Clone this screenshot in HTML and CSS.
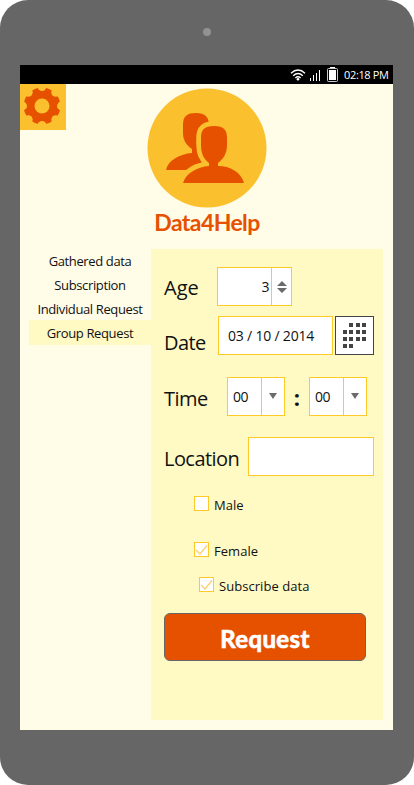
FILE: index.html
```html
<!DOCTYPE html>
<html lang="en">
<head>
<meta charset="utf-8">
<title>Data4Help</title>
<link rel="stylesheet" href="styles.css">
</head>
<body>
<div class="device">
  <div class="speaker"><span class="camera"></span></div>
  <main class="screen">
    <div class="status">
      <svg class="wifi" width="16" height="12" viewBox="0 0 16 12" fill="none" stroke="#fff" stroke-width="1.4"><path d="M1 4.2Q8-2 15 4.2M3.2 6.7Q8 2.5 12.8 6.7M5.4 9Q8 6.6 10.6 9"/><circle cx="8" cy="10.2" r="1.3" fill="#fff" stroke="none"/></svg>
      <svg class="signal" width="11" height="12" viewBox="0 0 11 12" fill="#fff"><path d="M0 9h1v3H0zM3 6h1v6H3zM6 4h1v8H6zM9 1h1v11H9z"/></svg>
      <svg class="battery" width="11" height="15" viewBox="0 0 11 15"><path d="M3 0h5v2H3z" fill="#fff"/><rect x=".5" y="1.5" width="10" height="13" rx="1" fill="none" stroke="#ccc"/><path d="M2 3h7v10H2z" fill="#fff"/></svg>
      <span class="clock">02:18 PM</span>
    </div>
    <header class="header">
      <button class="settings" aria-label="Settings">
        <svg width="46" height="46" viewBox="0 0 46 46"><circle cx="22" cy="22" r="18.4" fill="#e65100"/><g fill="#fbc02d"><circle cx="22" cy="22" r="7.5"/><circle cx="22" cy="2.6" r="4.4"/><circle cx="22" cy="41.4" r="4.4"/><circle cx="2.6" cy="22" r="4.4"/><circle cx="41.4" cy="22" r="4.4"/><circle cx="8.3" cy="8.3" r="4.4"/><circle cx="35.7" cy="8.3" r="4.4"/><circle cx="8.3" cy="35.7" r="4.4"/><circle cx="35.7" cy="35.7" r="4.4"/></g></svg>
      </button>
      <div class="brand">
        <svg width="120" height="120" viewBox="0 0 120 120"><circle cx="60" cy="60" r="59.5" fill="#fbc02d"/><path d="M49 25C58 25 62 29 62 37V45C62 54 58 60 53 63V65C65 66 75 70 79 82H19C21 72 33 66 45 65V61C39 57 36 52 36 45V37C36 28 40 25 49 25Z" fill="#e65100"/><path d="M67 38C77 38 80 42 80 50V57C80 66 76 71 71 75V78C83 78 94 84 97 95H36C39 85 50 79 62 78V75C57 71 54 66 54 57V50C54 42 57 38 67 38Z" fill="#fbc02d" stroke="#fbc02d" stroke-width="9.5"/><path d="M67 38C77 38 80 42 80 50V57C80 66 76 71 71 75V78C83 78 94 84 97 95H36C39 85 50 79 62 78V75C57 71 54 66 54 57V50C54 42 57 38 67 38Z" fill="#e65100"/></svg>
        <h1 class="title">Data4Help</h1>
      </div>
    </header>
    <div class="content">
      <nav class="nav">
        <a class="link">Gathered data</a>
        <a class="link">Subscription</a>
        <a class="link">Individual Request</a>
        <a class="link active">Group Request</a>
      </nav>
      <form class="panel">
        <div class="row age">
          <span class="label">Age</span>
          <div class="field split"><span class="value number">3</span><span class="arrow"><svg width="10" height="12" viewBox="0 0 10 12" fill="#6b6b6b"><path d="M0 5L5 0L10 5zM0 7h10L5 12z"/></svg></span></div>
        </div>
        <div class="row date">
          <span class="label">Date</span>
          <div class="field date-value">03 / 10 / 2014</div>
          <div class="calendar"><svg width="23" height="25" viewBox="0 0 23 25" fill="#444"><path d="M6 0h4v4H6zM13 0h4v4h-4zM19 0h4v4h-4zM0 7h4v4H0zM6 7h4v4H6zM13 7h4v4h-4zM19 7h4v4h-4zM0 14h4v4H0zM6 14h4v4H6zM13 14h4v4h-4zM19 14h4v4h-4zM0 21h4v4H0zM6 21h4v4H6z"/></svg></div>
        </div>
        <div class="row time">
          <span class="label">Time</span>
          <div class="field split"><span class="value">00</span><span class="arrow drop"><svg width="8" height="6" viewBox="0 0 8 6" fill="#6b6b6b"><path d="M0 0h8L4 6z"/></svg></span></div>
          <span class="colon">:</span>
          <div class="field split"><span class="value">00</span><span class="arrow drop"><svg width="8" height="6" viewBox="0 0 8 6" fill="#6b6b6b"><path d="M0 0h8L4 6z"/></svg></span></div>
        </div>
        <div class="row location">
          <span class="label">Location</span>
          <div class="field place"></div>
        </div>
        <div class="check male"><span class="box"></span><span class="text">Male</span></div>
        <div class="check female"><span class="box"><svg width="13" height="13" viewBox="0 0 13 13" fill="none" stroke="#fbd070" stroke-width="1.3"><path d="M1 7L5 11L12 2.5"/></svg></span><span class="text">Female</span></div>
        <div class="check subscribe"><span class="box"><svg width="13" height="13" viewBox="0 0 13 13" fill="none" stroke="#fbd070" stroke-width="1.3"><path d="M1 7L5 11L12 2.5"/></svg></span><span class="text">Subscribe data</span></div>
        <button class="submit" type="button">Request</button>
      </form>
    </div>
  </main>
</div>
</body>
</html>
```
FILE: styles.css
```css
* { box-sizing: border-box; }
body { margin: 0; background: #fff; font: 13px/18px "Open Sans", "Noto Sans", sans-serif; color: #111; }
svg { display: block; }
button { border: 0; padding: 0; }
.device { width: 414px; height: 785px; padding: 0 21px 55px 20px; background: #666; border-radius: 28px; overflow: hidden; }
.speaker { height: 65px; display: flex; justify-content: center; padding-top: 28px; }
.camera { width: 8px; height: 8px; border-radius: 50%; background: #929292; }
.screen { height: 665px; background: #fffce8; }
.status { height: 19px; background: #000; color: #fff; display: flex; align-items: center; justify-content: flex-end; padding-right: 4px; }
.signal { margin-left: 4px; }
.battery { margin-left: 6px; }
.clock { margin-left: 6px; width: 45px; font-size: 11px; line-height: 17px; letter-spacing: -.35px; white-space: nowrap; padding-bottom: 1px; }
.header { height: 165px; display: grid; grid-template-columns: 46px 1fr 46px; }
.settings { width: 46px; height: 46px; background: #fbc02d; }
.brand { padding-top: 4px; display: flex; flex-direction: column; align-items: center; }
.title { margin: 0 0 0 1px; font: bold 23px/28px Lato, sans-serif; color: #e65100; letter-spacing: -.6px; }
.content { display: flex; padding: 0 10px 0 9px; }
.nav { width: 122px; display: flex; flex-direction: column; }
.link { height: 24px; line-height: 27px; text-align: center; white-space: nowrap; letter-spacing: -.37px; }
.link:first-child { margin-top: -1px; }
.nav .active { height: 25px; line-height: 27px; background: #fff9c4; }
.panel { width: 232px; height: 471px; padding: 18px 9px 0 13px; background: #fff9c4; }
.row { height: 39px; display: flex; }
.label { font-size: 20px; line-height: 40px; flex-shrink: 0; white-space: nowrap; letter-spacing: -.55px; }
.field { height: 39px; background: #fff; border: 1px solid #ffca28; font-size: 14px; line-height: 38px; }
.split { display: flex; width: 58px; }
.value { flex: 1; padding-left: 5px; letter-spacing: -.5px; }
.number { text-align: right; padding: 0 2px 0 0; }
.arrow { width: 23px; border-left: 1px solid #ffca28; display: flex; justify-content: center; align-items: center; }
.age .arrow { width: 20px; }
.drop { padding-bottom: 2px; }
.age .label { width: 53px; line-height: 42px; letter-spacing: 0; }
.age .split { width: 75px; }
.date { margin-top: 10px; }
.date .label { width: 54px; line-height: 54px; }
.date-value { width: 115px; padding-left: 9px; white-space: nowrap; letter-spacing: -.2px; }
.calendar { width: 39px; height: 39px; margin-left: 2px; border: 1px solid #444; background: #fff; padding: 6px 0 0 7px; }
.time { margin-top: 22px; }
.time .label { width: 63px; line-height: 43px; }
.colon { width: 24px; text-align: center; font-size: 22px; font-weight: bold; line-height: 40px; }
.location { margin-top: 21px; }
.location .label { width: 84px; line-height: 43px; }
.place { width: 126px; }
.check { height: 15px; display: flex; align-items: center; gap: 5px; padding-left: 30px; }
.box { width: 15px; height: 15px; background: #fff; border: 1px solid #ffca28; }
.text { line-height: 15px; padding-top: 4px; letter-spacing: .05px; }
.male { margin-top: 20px; }
.female { margin-top: 31px; }
.subscribe { margin-top: 20px; padding-left: 35px; }
.submit { display: block; width: 202px; height: 48px; margin-top: 21px; padding-top: 3px; border: 1px solid #666; border-radius: 6px; background: #e65100; color: #fff; font: bold 24px/42px Lato, sans-serif; letter-spacing: .4px; -webkit-text-stroke: .7px #fff; }
```
